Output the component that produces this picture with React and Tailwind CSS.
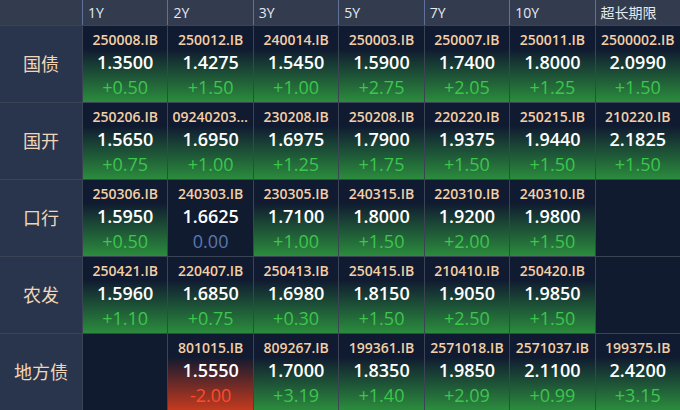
import React from "react";

const cols = ["1Y", "2Y", "3Y", "5Y", "7Y", "10Y", "超长期限"];

const rows = [
  {
    label: "国债",
    cells: [
      ["250008.IB", "1.3500", "+0.50"],
      ["250012.IB", "1.4275", "+1.50"],
      ["240014.IB", "1.5450", "+1.00"],
      ["250003.IB", "1.5900", "+2.75"],
      ["250007.IB", "1.7400", "+2.05"],
      ["250011.IB", "1.8000", "+1.25"],
      ["2500002.IB", "2.0990", "+1.50"],
    ],
  },
  {
    label: "国开",
    cells: [
      ["250206.IB", "1.5650", "+0.75"],
      ["092402030.IB", "1.6950", "+1.00"],
      ["230208.IB", "1.6975", "+1.25"],
      ["250208.IB", "1.7900", "+1.75"],
      ["220220.IB", "1.9375", "+1.50"],
      ["250215.IB", "1.9440", "+1.50"],
      ["210220.IB", "2.1825", "+1.50"],
    ],
  },
  {
    label: "口行",
    cells: [
      ["250306.IB", "1.5950", "+0.50"],
      ["240303.IB", "1.6625", "0.00"],
      ["230305.IB", "1.7100", "+1.00"],
      ["240315.IB", "1.8000", "+1.50"],
      ["220310.IB", "1.9200", "+2.00"],
      ["240310.IB", "1.9800", "+1.50"],
      null,
    ],
  },
  {
    label: "农发",
    cells: [
      ["250421.IB", "1.5960", "+1.10"],
      ["220407.IB", "1.6850", "+0.75"],
      ["250413.IB", "1.6980", "+0.30"],
      ["250415.IB", "1.8150", "+1.50"],
      ["210410.IB", "1.9050", "+2.50"],
      ["250420.IB", "1.9850", "+1.50"],
      null,
    ],
  },
  {
    label: "地方债",
    cells: [
      null,
      ["801015.IB", "1.5550", "-2.00"],
      ["809267.IB", "1.7000", "+3.19"],
      ["199361.IB", "1.8350", "+1.40"],
      ["2571018.IB", "1.9850", "+2.09"],
      ["2571037.IB", "2.1100", "+0.99"],
      ["199375.IB", "2.4200", "+3.15"],
    ],
  },
];

function Cell({ data }) {
  if (!data) return <div className="bg-[#111b30]" />;
  const [code, val, chg] = data;
  const up = chg.startsWith("+");
  const down = chg.startsWith("-");
  const bg = up
    ? "bg-[linear-gradient(to_bottom,#101a30_30%,#2b8c3d_100%)]"
    : down
    ? "bg-[linear-gradient(to_bottom,#101a30_30%,#c43a1e_100%)]"
    : "bg-[#111b30]";
  const chgColor = up ? "text-[#3cc64c]" : down ? "text-[#ff4b2b]" : "text-[#5a78ad]";
  return (
    <div className={`${bg} flex flex-col items-center pt-[4px] px-[4px] min-w-0 overflow-hidden`}>
      <div className="w-full text-center truncate text-[14px] leading-[20px] font-semibold text-[#f2cfa6]">
        {code}
      </div>
      <div className="text-[18px] leading-[24px] font-semibold text-white">{val}</div>
      <div className={`text-[18px] leading-[26px] ${chgColor}`}>{chg}</div>
    </div>
  );
}

export default function App() {
  return (
    <div
      className="w-[680px] h-[410px] overflow-hidden bg-[#3a4454]"
      style={{ fontFamily: '"Open Sans", "Noto Sans CJK SC", sans-serif' }}
    >
      <div className="grid grid-cols-[82px_repeat(7,minmax(0,1fr))] grid-rows-[25px_repeat(5,76px)] gap-x-px gap-y-px">
        <div className="bg-[#323c4e]" />
        {cols.map((c) => (
          <div
            key={c}
            className="bg-[#323c4e] text-[#e4e9f2] text-[14px] leading-[25px] pl-[5px] -ml-px border-l border-[#5f719a]"
          >
            {c}
          </div>
        ))}
        {rows.map((r) => (
          <React.Fragment key={r.label}>
            <div className="bg-[#28354d] flex items-center justify-center text-[18px] text-[#f1d5b6]">
              {r.label}
            </div>
            {r.cells.map((c, i) => (
              <Cell key={i} data={c} />
            ))}
          </React.Fragment>
        ))}
      </div>
    </div>
  );
}
